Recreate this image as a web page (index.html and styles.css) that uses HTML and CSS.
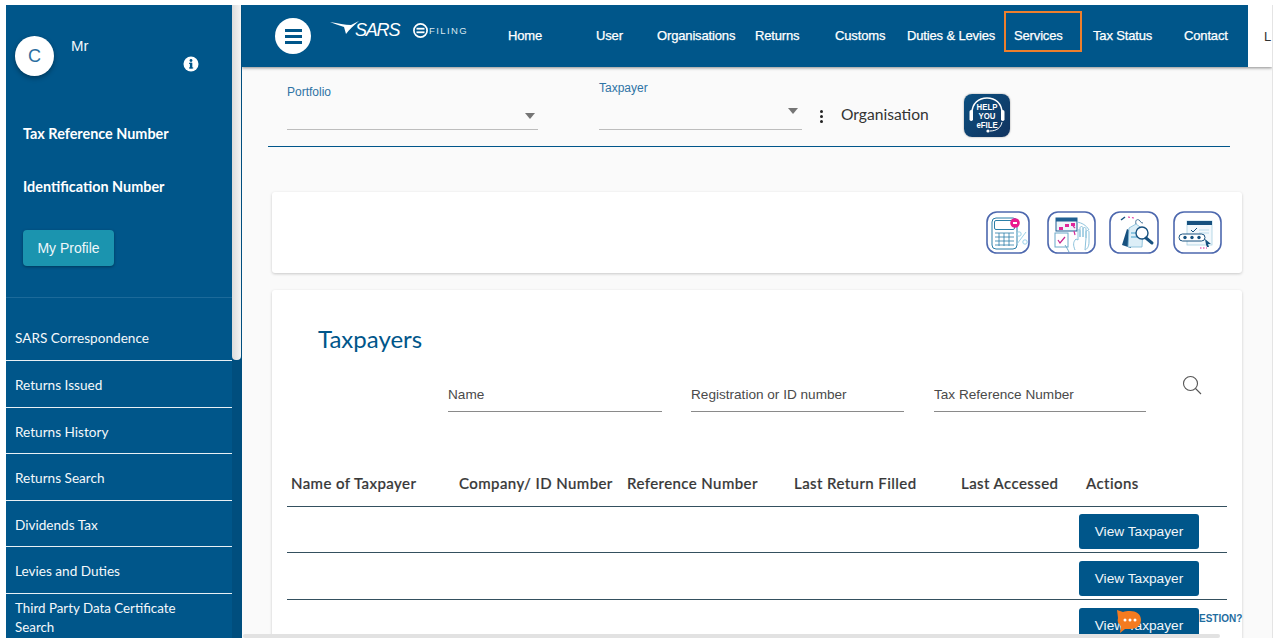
FILE: index.html
```html
<!DOCTYPE html>
<html lang="en">
<head>
<meta charset="utf-8">
<title>SARS eFiling - Taxpayers</title>
<link rel="stylesheet" href="styles.css">
</head>
<body>
<div class="frame">
  <aside class="sidebar">
    <div class="profile">
      <div class="profile-head">
        <div class="avatar">C</div>
        <div class="title-name">Mr</div>
        <svg class="info" viewBox="0 0 16 16" width="16" height="16"><circle cx="8" cy="8" r="7.5" fill="#fff"/><rect x="6.9" y="6.8" width="2.4" height="5.6" fill="#00568a"/><rect x="6" y="6.8" width="3" height="1.1" fill="#00568a"/><rect x="6" y="11.4" width="4.2" height="1.1" fill="#00568a"/><circle cx="8" cy="4.5" r="1.4" fill="#00568a"/></svg>
      </div>
      <div class="id-label first">Tax Reference Number</div>
      <div class="id-label second">Identification Number</div>
      <button class="profile-btn">My Profile</button>
    </div>
    <nav class="menu">
      <a class="menu-item top">SARS Correspondence</a>
      <a class="menu-item">Returns Issued</a>
      <a class="menu-item">Returns History</a>
      <a class="menu-item">Returns Search</a>
      <a class="menu-item">Dividends Tax</a>
      <a class="menu-item">Levies and Duties</a>
      <a class="menu-item multi">Third Party Data Certificate Search</a>
    </nav>
  </aside>
  <div class="side-scroll"><div class="side-thumb"></div></div>
  <div class="main">
    <header class="topbar">
      <div class="bar">
        <button class="burger"><span></span><span></span><span></span></button>
        <div class="logo">
          <svg class="bird" viewBox="0 0 30 14" width="30" height="14"><path d="M0 1 C8 2 15 4 21 4 L29 0 C24 4 19 9 16 13 L14 6 C9 4 4 3 0 1 Z" fill="#fff"/></svg>
          <span class="sars">SARS</span>
          <svg class="ecircle" viewBox="0 0 15 15" width="15" height="15"><circle cx="7.5" cy="7.5" r="6.6" fill="none" stroke="#fff" stroke-width="1.7"/><rect x="3.5" y="4.8" width="8" height="1.8" fill="#fff"/><rect x="3.5" y="8.4" width="8" height="1.8" fill="#fff"/></svg>
          <span class="filing">FILING</span>
        </div>
        <nav class="nav">
          <a>Home</a><a>User</a><a>Organisations</a><a>Returns</a><a>Customs</a><a>Duties &amp; Levies</a><a class="active">Services</a><a>Tax Status</a><a>Contact</a>
        </nav>
      </div>
      <div class="bar-rest">L</div>
    </header>
    <div class="filters">
      <div class="field portfolio"><label>Portfolio</label><i class="caret"></i></div>
      <div class="field taxpayer"><label>Taxpayer</label><i class="caret"></i></div>
      <div class="kebab"><span></span><span></span><span></span></div>
      <div class="org">Organisation</div>
      <div class="help">
        <svg class="headset" viewBox="0 0 46 43" width="46" height="43"><path d="M8 24 V19 C8 9 15 4 23 4 C31 4 38 9 38 19 V24" fill="none" stroke="#fff" stroke-width="1.6"/><rect x="5.500" y="16" width="3.500" height="11" rx="1.700" fill="#fff"/><rect x="37" y="16" width="3.500" height="11" rx="1.700" fill="#fff"/><path d="M38 28 C37 34 32 37 26 37" fill="none" stroke="#fff" stroke-width="1"/><circle cx="24" cy="37" r="1.600" fill="#fff"/></svg>
        <span class="help-text">HELP<br>YOU<br>eFILE</span>
      </div>
    </div>
    <section class="card tools">
      <div class="tool w44"><svg viewBox="0 0 44 43" width="44" height="43"><rect x="1" y="1" width="42" height="41" rx="10" fill="#fff" stroke="#4d68ae" stroke-width="1.600"/><rect x="6" y="7" width="25" height="31" rx="4" fill="none" stroke="#2b7fa8" stroke-width="1"/><rect x="8.500" y="9.500" width="20" height="9" rx="1.500" fill="none" stroke="#2b7fa8" stroke-width="1"/><path d="M9 22 H28 M9 26 H28 M9 30 H28 M9 34 H28 M13 22 V35 M18 22 V35 M23 22 V35" stroke="#2b7fa8" stroke-width=".8"/><circle cx="29" cy="12" r="4.800" fill="#ea1a8e"/><rect x="27" y="11" width="4" height="2" fill="#fff"/><path d="M31 33 L40 21" stroke="#9cd2e8" stroke-width="1"/><circle cx="33" cy="23" r="2.200" fill="none" stroke="#9cd2e8"/><circle cx="39" cy="31" r="2.200" fill="none" stroke="#9cd2e8"/></svg></div>
      <div class="tool w49"><svg viewBox="0 0 49 43" width="49" height="43"><rect x="1" y="1" width="47" height="41" rx="10" fill="#fff" stroke="#4d68ae" stroke-width="1.600"/><rect x="9" y="7" width="21" height="13" fill="#eef4fa" stroke="#1f5f92"/><rect x="9" y="7" width="21" height="3.500" fill="#1f5f92"/><path d="M12 16 H16 V19 H12 Z M18 13 H22 V16 H18 Z M24 12 H28 V15 H24 Z" fill="#e0259a"/><rect x="8" y="22" width="13" height="14" fill="#fff" stroke="#6ba8c8"/><path d="M11 29 L13 32 L18 26" fill="none" stroke="#c4258d" stroke-width="1.200"/><path d="M18 34 C20 37 21 39 22 41" fill="none" stroke="#6ba8c8" stroke-width="1"/><path d="M30 11 C35 12 39 14 42 19" fill="none" stroke="#8cc2dc" stroke-width="1"/><path d="M28 39 C26 34 26 31 29 28 L31 29 V20 C31 18 33 18 33 20 V26 M33 26 V17 C33 15 36 15 36 17 V26 M36 26 V18 C36 16 39 16 39 18 V27 M39 27 V21 C39 19 42 19 42 21 V31 C42 36 40 38 38 39 Z" fill="#fff" stroke="#8cc2dc" stroke-width="1"/><path d="M27 20 L28 24 M26 15 L28 17" stroke="#d92e9c" stroke-width="1.200"/></svg></div>
      <div class="tool w50"><svg viewBox="0 0 50 43" width="50" height="43"><rect x="1" y="1" width="48" height="41" rx="10" fill="#fff" stroke="#4d68ae" stroke-width="1.600"/><path d="M18 18 L13 34 L22 37 L22 20 Z" fill="#17517f"/><path d="M20 17 L27 13 L34 18 L33 36 L19 36 Z" fill="#dceef7" stroke="#7cb8d6" stroke-width=".8"/><path d="M22 22 H28 M22 26 H28" stroke="#3f9dcb" stroke-width="1.200"/><circle cx="33" cy="22" r="6" fill="#fff" stroke="#17517f" stroke-width="1.400"/><path d="M37 27 L43 32" stroke="#17517f" stroke-width="3" stroke-linecap="round"/><path d="M12 9 L16 6" stroke="#17517f" stroke-width="1.500"/><path d="M19 6 L25 7" stroke="#e0259a" stroke-width="1" stroke-dasharray="2 2"/><path d="M27 13 C26 9 28 8 30 9 C32 10 31 12 34 12" fill="none" stroke="#17517f" stroke-width=".8"/></svg></div>
      <div class="tool w49"><svg viewBox="0 0 49 43" width="49" height="43"><rect x="1" y="1" width="47" height="41" rx="10" fill="#fff" stroke="#4d68ae" stroke-width="1.600"/><rect x="14" y="10" width="25" height="24" fill="#f2f8fc" stroke="#a8cfe2" stroke-width=".8"/><rect x="14" y="10" width="25" height="4" fill="#17517f"/><path d="M18 19 L20 21 L24 17" fill="none" stroke="#17517f" stroke-width="1"/><path d="M26 19 H36 M26 22 H36" stroke="#bcdcec" stroke-width="1"/><rect x="6" y="23" width="26" height="7" rx="3.500" fill="#fff" stroke="#17517f" stroke-width="1"/><circle cx="12" cy="26.500" r="1.700" fill="#17517f"/><circle cx="19" cy="26.500" r="1.700" fill="#17517f"/><circle cx="26" cy="26.500" r="1.700" fill="#17517f"/><path d="M32 28 L38 33 L35 33 L36 36 L34 36 L33 33.500 Z" fill="#17517f"/><path d="M27 37 H34" stroke="#e0259a" stroke-dasharray="1.500 1.500"/></svg></div>
    </section>
    <section class="card taxpayers">
      <h1 class="heading">Taxpayers</h1>
      <div class="search">
        <div class="search-field name">Name</div>
        <div class="search-field reg">Registration or ID number</div>
        <div class="search-field ref">Tax Reference Number</div>
        <svg class="magnifier" viewBox="0 0 20 20" width="20" height="20"><circle cx="8.500" cy="8.500" r="7" fill="none" stroke="#555" stroke-width="1.100"/><path d="M13.500 13.500 L19 19" stroke="#555" stroke-width="1.100"/></svg>
      </div>
      <table class="grid">
        <colgroup><col class="c1"><col class="c2"><col class="c3"><col class="c4"><col class="c5"><col class="c6"></colgroup>
        <thead>
          <tr><th>Name of Taxpayer</th><th>Company/ ID Number</th><th>Reference Number</th><th>Last Return Filled</th><th>Last Accessed</th><th class="actions">Actions</th></tr>
        </thead>
        <tbody>
          <tr><td></td><td></td><td></td><td></td><td></td><td><button class="view">View Taxpayer</button></td></tr>
          <tr><td></td><td></td><td></td><td></td><td></td><td><button class="view">View Taxpayer</button></td></tr>
          <tr><td></td><td></td><td></td><td></td><td></td><td><button class="view">View Taxpayer</button></td></tr>
        </tbody>
      </table>
    </section>
    <div class="question">ESTION?</div>
    <svg class="chat" viewBox="0 0 26 26" width="26" height="26"><path d="M1 1 L7 3 C9 2 11 2 14 2 C20 2 25 5 25 11 C25 17 20 20 14 20 L9 20 L4 24 L5 17 C2 15 1 12 2 9 Z" fill="#f47b20"/><circle cx="9" cy="11" r="1.500" fill="#fff"/><circle cx="14" cy="11" r="1.500" fill="#fff"/><circle cx="19" cy="11" r="1.500" fill="#fff"/></svg>
    <div class="bottom-scroll"></div>
  </div>
  <div class="page-scroll"></div>
</div>
</body>
</html>
```
FILE: styles.css
```css
* { box-sizing: border-box; }
html, body { margin: 0; padding: 0; height: 100%; background: #fff; overflow: hidden; }
body { font-family: "Liberation Sans", Arial, sans-serif; }
.frame { display: flex; margin: 5px 0 0 6px; height: 633px; }

.sidebar { width: 226px; flex: none; background: #00568a; color: #fff; display: flex; flex-direction: column; overflow: hidden; }
.profile { height: 293px; flex: none; border-bottom: 1px solid #1c6a9a; padding: 31px 0 0 0; }
.profile-head { display: flex; position: relative; height: 40px; padding-left: 9px; }
.avatar { width: 39px; height: 40px; border-radius: 50%; background: #fff; color: #2c6ea0; font-size: 18px; display: flex; align-items: center; justify-content: center; box-shadow: 0 2px 5px rgba(0,0,0,.35); }
.title-name { margin: 2px 0 0 17px; font-size: 15px; line-height: 16px; color: #f2f6fa; }
.info { position: absolute; left: 177px; top: 20px; }
.id-label { font-family: Lato, sans-serif; font-weight: 700; font-size: 14.400px; line-height: 18px; margin-left: 17px; }
.id-label.first { margin-top: 49px; }
.id-label.second { margin-top: 35px; }
.profile-btn { display: block; margin: 34px 0 0 17px; width: 91px; height: 36px; border: 0; border-radius: 4px; background: #1b94af; color: #eef7fa; font: 14px "Liberation Sans", sans-serif; box-shadow: 0 1px 3px rgba(0,0,0,.35); }
.menu { display: flex; flex-direction: column; }
.menu-item { display: flex; align-items: center; height: 46.500px; padding: 3px 9px 0; font-family: Lato, sans-serif; font-size: 13.600px; color: #f4f8fb; border-bottom: 1.500px solid #e8f0f5; }
.menu-item.top { height: 63px; padding-top: 17px; }
.menu-item.multi { height: 50px; border: 0; line-height: 19px; padding: 5px 40px 0 9px; font-size: 13.350px; align-items: flex-start; }

.side-scroll { width: 10px; flex: none; background: #004e7e; }
.side-thumb { width: 9px; height: 355px; background: linear-gradient(90deg, #dcdcdc, #f4f4f4); border-radius: 0 0 4px 4px; }

.main { flex: 1; min-width: 0; background: #fafafa; position: relative; overflow: hidden; }
.topbar { display: flex; height: 62px; box-shadow: 0 1px 3px rgba(0,0,0,.45); position: relative; }
.bar { width: 1006px; flex: none; background: #00568a; display: flex; position: relative; }
.bar-rest { flex: 1; background: #fff; color: #333; font-size: 13px; padding: 24px 0 0 16px; }
.burger { width: 36px; height: 36px; margin: 13px 0 0 33px; border: 0; border-radius: 50%; background: #fff; padding: 0; display: flex; flex-direction: column; align-items: center; justify-content: center; gap: 3px; flex: none; }
.burger span { width: 17px; height: 3px; background: #00568a; display: block; }
.logo { display: flex; align-items: center; height: 26px; margin: 12px 0 0 19px; width: 178px; flex: none; position: relative; color: #fff; }
.bird { flex: none; margin-top: -4px; }
.sars { font-style: italic; font-size: 18px; letter-spacing: -1.200px; margin-left: -5px; width: 44px; line-height: 20px; flex: none; }
.ecircle { margin-left: 14px; flex: none; }
.filing { font-size: 9.500px; letter-spacing: 1.400px; margin-left: 1px; color: #d9e6ef; }
.nav { display: grid; grid-template-columns: 88px 61px 98px 80px 72px 107px 79px 91px 64px; flex: none; height: 62px; align-items: center; }
.nav a { color: #fff; font-size: 13px; line-height: 16px; letter-spacing: -.15px; position: relative; white-space: nowrap; -webkit-text-stroke: .25px #fff; }
.nav a.active::after { content: ""; position: absolute; left: -10px; top: -17px; width: 78px; height: 41px; box-sizing: border-box; border: 2px solid #ee7f2d; }

.filters { display: flex; align-items: flex-end; height: 80px; margin: 0 42px 0 26px; padding: 0 0 16px 19px; border-bottom: 1px solid #00568a; position: relative; }
.field { position: relative; border-bottom: 1px solid #bdbdbd; flex: none; }
.field label { display: block; font-size: 12px; line-height: 14px; color: #2f74a5; }
.portfolio { width: 251px; height: 45px; }
.taxpayer { width: 203px; height: 49px; margin-left: 61px; }
.caret { position: absolute; width: 0; height: 0; border-left: 5.500px solid transparent; border-right: 5.500px solid transparent; border-top: 6px solid #757575; right: 3px; }
.portfolio .caret { top: 28px; }
.taxpayer .caret { top: 27px; right: 4px; }
.kebab { position: absolute; left: 552px; top: 43px; display: flex; flex-direction: column; gap: 2px; }
.kebab span { width: 3px; height: 3px; border-radius: 50%; background: #222; display: block; }
.org { position: absolute; left: 573px; top: 36px; font-family: Lato, sans-serif; font-size: 15.600px; line-height: 22px; color: #333; }
.help { position: absolute; left: 696px; top: 27px; width: 46px; height: 43px; background: linear-gradient(135deg, #0b4f80, #12345f); border-radius: 8px; color: #fff; overflow: hidden; box-shadow: 0 0 2px rgba(0,0,0,.4); }
.headset { position: absolute; left: 0; top: 0; }
.help-text { position: absolute; left: 0; width: 46px; top: 8px; text-align: center; font-size: 9.500px; font-weight: 700; line-height: 9px; transform: scaleX(.82); }

.card { background: #fff; border-radius: 3px; box-shadow: 0 1px 3px rgba(0,0,0,.2); margin: 0 30px; }
.tools { height: 81px; margin-top: 45px; display: flex; justify-content: flex-end; align-items: flex-start; padding: 19px 20px 0 0; }
.tool { flex: none; height: 43px; }
.tool + .tool { margin-left: 14px; }
.tool:nth-child(3) { margin-left: 13px; }
.tool svg { display: block; }
.w44 { width: 44px; margin-right: 3px; }
.w49 { width: 49px; }
.w50 { width: 50px; }
.taxpayers { margin-top: 17px; height: 360px; padding-top: 33px; }
.heading { margin: 0 0 0 46px; font-family: Lato, sans-serif; font-weight: 400; font-size: 24px; line-height: 32px; color: #00568a; }
.search { display: flex; position: relative; margin: 21px 0 0 176px; height: 36px; }
.search-field { border-bottom: 1px solid #8a8a8a; font-size: 13.600px; line-height: 17px; color: #4a4a4a; padding-top: 10px; height: 36px; flex: none; }
.name { width: 214px; }
.reg { width: 213px; margin-left: 29px; }
.ref { width: 212px; margin-left: 30px; }
.magnifier { position: absolute; left: 734px; top: -1px; }
.grid { border-collapse: collapse; table-layout: fixed; width: 940px; margin: 48px 0 0 15px; }
.c1 { width: 168px; } .c2 { width: 168px; } .c3 { width: 167px; } .c4 { width: 167px; } .c5 { width: 118px; } .c6 { width: 152px; }
.grid th { font-family: Lato, sans-serif; font-size: 15px; font-weight: 500; color: #383838; text-align: left; padding: 0 0 0 4px; height: 46px; vertical-align: middle; letter-spacing: .42px; white-space: nowrap; border-bottom: 1px solid #34505f; -webkit-text-stroke: .2px #383838; }
.grid th.actions { padding-left: 11px; }
.grid td { height: 46.500px; padding: 8px 0 0 4px; vertical-align: top; border-bottom: 1px solid #34505f; }
.grid tbody tr:first-child td { padding-top: 7px; }
.view { display: block; width: 120px; height: 35px; border: 0; border-radius: 3px; background: #00568a; color: #f2f7fa; font: 13.700px "Liberation Sans", sans-serif; }
.question { position: absolute; left: 957px; top: 608px; font-size: 10px; font-weight: 700; color: #1f6d9f; line-height: 12px; }
.chat { position: absolute; left: 874px; top: 604px; }
.bottom-scroll { position: absolute; left: 1px; right: 52px; bottom: 0; height: 4px; background: #e2e2e2; border-radius: 2px; }
.page-scroll { width: 8px; flex: none; background: #fff; border-left: 1px solid #e4e4e4; }
```
